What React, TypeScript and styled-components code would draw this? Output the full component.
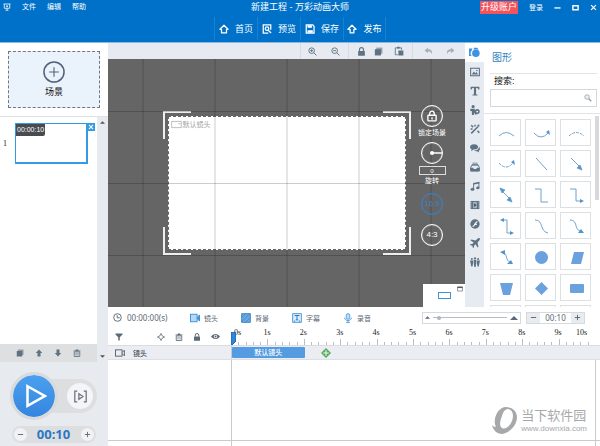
import React from "react";
import styled, { createGlobalStyle, css } from "styled-components";

const GlobalStyle = createGlobalStyle`
  *, *::before, *::after { box-sizing: border-box; }
  body { margin: 0; overflow: hidden; font-family: "Liberation Sans", "Noto Sans CJK SC", sans-serif; font-size: 8px; color: #222; }
  button, input { font: inherit; color: inherit; margin: 0; padding: 0; }
  button { border: 0; background: none; cursor: pointer; }
  svg { display: block; flex: none; }
`;

const SLATE = "#5f7282";
const BLUE = "#2f86d8";

/* ---------- icons ---------- */

type IconProps = { name: string; size?: number; color?: string };

const icons: Record<string, React.ReactNode> = {
  logo: <g fill="none" stroke="currentColor" strokeWidth="1.6"><path d="M1 2h14M2.500 2v8.500h11V2M8 10.500V14M5 14.500h6M8 4.500v4M6 6.500h4" /></g>,
  home: <path d="M8 2 1.500 8.500H4V14h8V8.500h2.500z" fill="none" stroke="currentColor" strokeWidth="2" strokeLinejoin="round" />,
  preview: <g fill="none" stroke="currentColor" strokeWidth="2"><path d="M14 9V1.500H2v13h8" /><circle cx="8" cy="7.500" r="2.800" /><path d="m10 10 4.500 4.500" /></g>,
  save: <g><path d="M2 1.500h10.500L14.500 4v10.500H2z" fill="none" stroke="currentColor" strokeWidth="2" /><path d="M4 2h7v4H4zM4 10h8.500v4H4z" fill="currentColor" /></g>,
  publish: <path d="M8 2 1.500 8.500H5V14h6V8.500h3.500z" fill="none" stroke="currentColor" strokeWidth="2" strokeLinejoin="round" />,
  zoomIn: <g fill="none" stroke="currentColor" strokeWidth="1.700"><circle cx="6.500" cy="6.500" r="5" /><path d="m10.500 10.500 4.500 4.500M4 6.500h5M6.500 4v5" /></g>,
  zoomOut: <g fill="none" stroke="currentColor" strokeWidth="1.700"><circle cx="6.500" cy="6.500" r="5" /><path d="m10.500 10.500 4.500 4.500M4 6.500h5" /></g>,
  lock: <g><rect x="2" y="7" width="12" height="8.500" rx="1" fill="currentColor" /><path d="M4.500 7V4.500a3.500 3.500 0 0 1 7 0V7" fill="none" stroke="currentColor" strokeWidth="2" /></g>,
  lockLine: <g fill="none" stroke="currentColor" strokeWidth="1.800"><rect x="2.500" y="7" width="11" height="7.500" rx="1" /><path d="M5 7V4.500a3 3 0 0 1 6 0V7M8 9.500v3" /></g>,
  copy: <g><path d="M4 1h11v11H4z" fill="currentColor" opacity=".6" /><path d="M1.500 4h11v11h-11z" fill="currentColor" /></g>,
  paste: <g><path d="M6 14H2V3h10v3" fill="none" stroke="currentColor" strokeWidth="1.400" /><path d="M5 1h4v3H5zM7 7h8v8H7z" fill="currentColor" /></g>,
  undo: <path d="M1 6 7 1v3c6 0 8 3 7 9-1-4-3-5-7-5v3z" fill="currentColor" />,
  redo: <path d="M15 6 9 1v3C3 4 1 7 2 13c1-4 3-5 7-5v3z" fill="currentColor" />,
  shapes: <g fill="currentColor"><path d="M0 2h5l-1 3a6 6 0 0 0 0 8H0z" /><circle cx="10" cy="9" r="5.500" /><path d="M7 1h5l2 2.500H7z" /></g>,
  image: <g><rect x="1" y="2" width="14" height="12" fill="none" stroke="currentColor" strokeWidth="1.700" /><path d="m3 12 3-5 2.500 3 2-2 2.500 4z" fill="currentColor" /><circle cx="11" cy="5.500" r="1.200" fill="currentColor" /></g>,
  text: <path d="M1 1h14v4.500h-1.500L12 3H9.700v10.300l2.300.7v1H4v-1l2.300-.7V3H4L2.500 5.500H1z" fill="currentColor" />,
  person: <g fill="currentColor"><circle cx="5" cy="2.500" r="2.500" /><path d="M1 6h6l2 3 2-1v7H8l-1-3-1 4H3V10L0 9z" /><circle cx="11.500" cy="10.500" r="4" /><circle cx="11.500" cy="10.500" r="1.500" fill="#eef1f6" /></g>,
  wand: <g stroke="currentColor" strokeWidth="2.400" fill="none"><path d="m2 15 11-11M2 2l3 3M12 11l3 3M8 1v3M1 8h3" /><path d="M12 1h3v3h-3z" fill="currentColor" stroke="none" /></g>,
  chat: <g fill="currentColor"><path d="M6.500 2C2.500 2 0 4 0 6.500 0 8 1 9.500 2.500 10L2 13l3.500-2.500C10 11 13 9 13 6.500S10.500 2 6.500 2z" /><path d="M14.500 6c2 2 2 5-.5 6.500l.5 2.500-3-2c-2 .5-4 0-5-1 4.500 0 8-2 8-6z" /></g>,
  tray: <g><path d="M1 9 3 5h10l2 4v5H1z" fill="none" stroke="currentColor" strokeWidth="1.600" /><path d="M1 9h4l1 2h4l1-2h4v6H1zM4 1h8v1.500H4zM3 3.200h10v1H3z" fill="currentColor" /></g>,
  music: <g fill="currentColor"><path d="M5 3 15 1v3L6.500 5.500V13H5z" /><path d="M13.500 2H15v9h-1.500z" /><ellipse cx="4" cy="13" rx="3" ry="2.400" /><ellipse cx="12.500" cy="11" rx="2.700" ry="2.200" /></g>,
  film: <g><path d="M1 1.500h14v13H1z" fill="currentColor" /><path d="M5 3h6v10H5z" fill="#a6b4bf" /><path d="m6.500 5 4 3-4 3z" fill="#44525e" /><path d="M2.500 3v10M13.500 3v10" stroke="#aebac4" strokeDasharray="1.500 1.500" /></g>,
  flash: <g><circle cx="8" cy="8" r="7.500" fill="currentColor" /><path d="M12 4c-4 0-3.500 8-8 8M6.500 8.500H11" stroke="#eef1f6" strokeWidth="2" fill="none" /></g>,
  plane: <path d="M15.500.5c-1-1-3 0-4 1L9 4 2 2.500.8 4 6 7 3.500 9.700 1 9.500 0 11l3.500 1.500L5 16l1.500-1-.2-2.500L9 10l3 5.200 1.500-1.200L12 7l2.500-2.500c1-1 2-3 1-4z" fill="currentColor" />,
  crowd: <g fill="currentColor"><circle cx="8" cy="2" r="1.800" /><circle cx="3" cy="3" r="1.600" /><circle cx="13" cy="3" r="1.600" /><path d="M6 4.500h4V10L9 16H7L6 10zM0 5.500h5V9L4 15H2L1 10zM11 5.500h5L15 10l-1 5h-2l-1-6z" /></g>,
  arrowUp: <path d="M8 1 1.500 8H5v7h6V8h3.500z" fill="currentColor" />,
  arrowDown: <path d="M8 15 1.500 8H5V1h6v7h3.500z" fill="currentColor" />,
  trash: <g><path d="M2.500 5.500h11V15h-11z" fill="none" stroke="currentColor" strokeWidth="1.700" /><path d="M1 3h14v1.700H1zM5.500 1h5v2h-5z" fill="currentColor" /><path d="M6 7v6M10 7v6" stroke="currentColor" strokeWidth="1.500" /></g>,
  clock: <g fill="none" stroke="currentColor" strokeWidth="1.700"><circle cx="8" cy="8" r="6.800" /><path d="M7.500 4v4.500H12" /></g>,
  camera: <g fill="none" stroke="currentColor" strokeWidth="1.300"><rect x=".8" y="3" width="10.500" height="10" /><path d="m11.500 7 3.500-3.500v9L11.500 9" /></g>,
  cameraBlue: <g stroke="#3c91dc" strokeWidth="1.500"><rect x=".8" y="2" width="10.500" height="12" fill="#b5d8f6" /><path d="m12 7 3.200-4v10L12 9z" fill="#3c91dc" /></g>,
  pattern: <g><path d="M1 1h14v14H1z" fill="#65aae7" stroke="#3479b9" strokeWidth="1.300" /><path d="m1 7 6-6M1 14 14 1M7 15l8-8" stroke="#3479b9" /></g>,
  caption: <g fill="none" stroke="#3c91dc" strokeWidth="1.400"><path d="M1 1h14v14H1z" fill="#dceefe" /><path d="M4.500 5V4h7v1M8 4v7M6 11h4M3 13h2M11 13h2" stroke="#286baf" /></g>,
  mic: <g fill="none" stroke="#4d9ae0" strokeWidth="1.500"><rect x="5.200" y="1" width="5.600" height="9" rx="2.800" fill="#c3e0f8" /><path d="M2.500 7.500c0 6 11 6 11 0M8 12v3M5 15h6" /></g>,
  funnel: <path d="M1 1h14v2L9.500 8.500V15h-3V8.500L1 3z" fill="currentColor" />,
  target: <g fill="none" stroke="currentColor" strokeWidth="1.600"><path d="m8 2.500 5.500 5.500L8 13.500 2.500 8z" /><path d="M8 0v5M8 11v5M0 8h5M11 8h5" /></g>,
  eye: <g><path d="M0 8c4-6 12-6 16 0-4 6-12 6-16 0z" fill="currentColor" /><circle cx="8" cy="8" r="3" fill="#fff" /><circle cx="8" cy="8" r="1.700" fill="currentColor" /></g>,
  minus: <path d="M2 8h12" stroke="currentColor" strokeWidth="2.200" />,
  plus: <path d="M2 8h12M8 2v12" stroke="currentColor" strokeWidth="2.200" />,
  min: <path d="M1 9h14" stroke="currentColor" strokeWidth="3" />,
  max: <path d="M2 4h12v9H2z" stroke="currentColor" strokeWidth="3.200" fill="none" />,
  close: <path d="m2.500 2.500 11 11m0-11-11 11" stroke="currentColor" strokeWidth="2.800" />,
  addScene: <g fill="none" stroke="currentColor" strokeWidth="1.100"><circle cx="8" cy="8" r="7.300" /><path d="M8 4.500v7M4.500 8h7" strokeWidth=".8" /></g>,
  search: <g fill="none" stroke="currentColor" strokeWidth="1.400"><circle cx="6" cy="6" r="4.500" fill="#edf1f4" /><path d="m9.500 9.500 5 5" strokeWidth="2.600" /></g>,
  play: <path d="M3 1.500 14.500 8 3 14.500z" fill="none" stroke="currentColor" strokeWidth="1.700" />,
  playRange: <g fill="none" stroke="currentColor" strokeWidth="1.500"><path d="M4 1.500H1v13h3M12 1.500h3v13h-3M6 4.500 11 8l-5 3.500z" /></g>,
  triUp: <path d="M0 12 8 4l8 8z" fill="currentColor" />,
  triDown: <path d="M0 4h16l-8 8z" fill="currentColor" />,
  addClip: <g><path d="m8 0 8 8-8 8-8-8z" fill="#55aa62" /><path d="M8 3.500v9M3.500 8h9" stroke="#e9f7ea" strokeWidth="1.800" /></g>,
  popout: <g><path d="M1.500 2.500h13v11h-13z" fill="none" stroke="currentColor" strokeWidth="1.600" /><path d="M1 2h14v3.500H1z" fill="currentColor" /></g>,
  shotTag: <path d="M1 3.500h14v9H1zM12 7l-1.500-1M12 7h2" fill="none" stroke="currentColor" strokeWidth="1" />,
};

const Icon = ({ name, size = 8, color = "currentColor" }: IconProps) => (
  <svg width={size} height={size} viewBox="0 0 16 16" color={color} aria-hidden="true">
    {icons[name]}
  </svg>
);

const HEAD = "#4f93d3";
const shapeArt: { label: string; art: React.ReactNode }[] = [
  { label: "arc", art: <path d="M8 16q7-7 15 0" /> },
  { label: "arc arrow", art: <><path d="M8 13q7 8 14 0" /><path d="m20 12 3-2 1 5z" fill={HEAD} stroke="none" /></> },
  { label: "dashed arc", art: <path d="M8 16q7-7 15 0" strokeDasharray="3 1" /> },
  { label: "dashed arc arrow", art: <><path d="M8 12q7 8 14 0" strokeDasharray="3 1" /><path d="m20 11 3-2 1 5z" fill={HEAD} stroke="none" /></> },
  { label: "line", art: <path d="m10 7 11 12" /> },
  { label: "arrow", art: <><path d="m10 7 9 9" /><path d="m21 19-5-2 3-3z" fill={HEAD} /></> },
  { label: "double arrow", art: <><path d="m11 9 8 8" /><path d="m9 6 5 2-3 3zM21 20l-5-2 3-3z" fill={HEAD} /></> },
  { label: "elbow", art: <path d="M9 7h6v13h7" /> },
  { label: "elbow arrow", art: <><path d="M9 7h6v12h6" /><path d="m23 19-4-2v4z" fill={HEAD} stroke="none" /></> },
  { label: "double elbow arrow", art: <><path d="M11 7h5v13h5" /><path d="m9 7 4-2v4zM23 20l-4-2v4z" fill={HEAD} stroke="none" /></> },
  { label: "curve", art: <path d="M9 7c9 0 4 11 13 13" /> },
  { label: "curve arrow", art: <><path d="M9 7c8 0 4 9 10 11" /><path d="m23 20-6 0 3-4z" fill={HEAD} stroke="none" /></> },
  { label: "double curve arrow", art: <><path d="M12 9c5 0 2 8 7 9" /><path d="m9 8 5-2 0 5zM22 20l-6 0 4-4z" fill={HEAD} stroke="none" /></> },
  { label: "circle", art: <circle cx="15.500" cy="13.500" r="6.500" fill="#6ba2dd" stroke="none" /> },
  { label: "parallelogram", art: <path d="M13 8h10l-3 12H10z" fill="#6ba2dd" stroke="none" /> },
  { label: "trapezoid", art: <path d="M9 8h13l-3 12h-7z" fill="#6ba2dd" stroke="none" /> },
  { label: "diamond", art: <path d="m15.500 7 6.500 6.500-6.500 6.500L9 13.500z" fill="#6ba2dd" stroke="none" /> },
  { label: "rectangle", art: <rect x="9" y="9" width="14" height="9" rx="1" fill="#6ba2dd" stroke="none" /> },
  { label: "square", art: null },
  { label: "ring", art: null },
  { label: "star", art: null },
];

/* ---------- shell ---------- */

const Shell = styled.div`display: flex; flex-direction: column; height: 100vh; min-height: 400px; background: #fff;`;

const Header = styled.header`
  flex: none; height: 43px; background: #0071c8; color: #fff; border-bottom: 1px solid #86bbe6;
`;
const TitleBar = styled.div`display: grid; grid-template-columns: 1fr auto 1fr; height: 14px; align-items: center;`;
const MenuBar = styled.nav`display: flex; align-items: center; gap: 11px; padding-left: 3px; font-size: 7px;`;
const MenuButton = styled.button`line-height: 12px;`;
const Title = styled.h1`margin: 0; font-size: 9px; line-height: 13px; font-weight: 400;`;
const WindowTools = styled.div`display: flex; justify-content: flex-end; align-items: center; gap: 11px; padding-right: 3px;`;
const Upgrade = styled.a`background: #f5535b; color: #fff; font-size: 9px; line-height: 13px; padding: 0 1px; text-decoration: none;`;
const Login = styled.a`color: #fff; font-size: 7px; text-decoration: none;`;
const MainNav = styled.nav`display: flex; justify-content: center; height: 28px; padding-top: 3px;`;
const NavButton = styled.button`
  display: flex; align-items: center; justify-content: center; gap: 6px; width: 43px; height: 23px;
  border-left: 1px solid #1d80cd; font-size: 9px;
  &:last-child { border-right: 1px solid #1d80cd; }
`;

const Body = styled.div`flex: 1; min-height: 0; display: grid; grid-template-columns: 108px minmax(0, 1fr);`;

/* ---------- left column ---------- */

const ScenePanel = styled.aside`display: flex; flex-direction: column; min-height: 0; background: #fff;`;
const AddArea = styled.div`flex: none; height: 74px; padding: 8px 8px 9px; border-bottom: 1px solid #dfe3e6;`;
const AddScene = styled.button`
  display: flex; flex-direction: column; align-items: center; justify-content: center; gap: 3px;
  width: 100%; height: 57px; border: 1px dashed #6d7884; background: #eaf2fc; color: #51627a;
  span { color: #111; font-size: 9px; line-height: 13px; }
`;
const SceneArea = styled.div`flex: 1; min-height: 0; display: grid; grid-template-columns: minmax(0, 1fr) 11px;`;
const SceneColumn = styled.div`display: flex; flex-direction: column;`;
const SceneList = styled.ol`flex: 1; list-style: none; margin: 0; padding: 6px 2px 0 3px;`;
const SceneItem = styled.li`display: flex; align-items: center; gap: 8px; font: 8px "Liberation Serif", serif;`;
const Thumb = styled.div`position: relative; width: 73px; height: 41px; border: 2px solid #349ae3; border-width: 1px 2px 2px 1px; background: #fff;`;
const ThumbTime = styled.span`
  position: absolute; left: 0; top: 0; padding: 0 1px; background: #484b50; color: #fff;
  font: 7px/12px "Liberation Sans", sans-serif; border-radius: 0 0 2px 0;
`;
const ThumbClose = styled.button`
  position: absolute; right: -9px; top: -1px; width: 8px; height: 8px; display: grid; place-items: center;
  background: #349ae3; color: #fff;
`;
const SceneTools = styled.div`
  display: flex; align-items: center; gap: 11px; height: 18px; padding-left: 16px; background: #dedfe0; color: ${SLATE};
`;
const ScrollRail = styled.div`
  display: flex; flex-direction: column; justify-content: space-between; align-items: center;
  padding: 3px 0 3px; background: #e7eaee; color: #4d555d;
`;

const Player = styled.section`
  flex: none; height: 84px; display: flex; flex-direction: column; align-items: center; justify-content: space-between;
  padding: 17px 11px 3px 10px; background: #e7ebef;
`;
const PlayRow = styled.div`
  display: flex; align-items: center; justify-content: space-between; width: 100%; height: 34px; padding-right: 4px;
  border-radius: 17px; background: #dcdee0;
`;
const PlayButton = styled.button`
  display: grid; place-items: center; width: 48px; height: 48px; margin: -7px 0; border: 3px solid #d8dadd; border-radius: 50%;
  background: linear-gradient(#4ca0f0, #3386de) padding-box; color: #fff; padding-left: 2px;
`;
const RangeButton = styled.button`
  display: grid; place-items: center; width: 26px; height: 26px; border-radius: 50%; background: #f3f5f8; color: #6a7078;
`;
const Duration = styled.div`
  display: flex; align-items: center; justify-content: space-between; width: 84px; height: 17px; padding: 0 2px;
  border-radius: 9px; background: #dcdee0; color: #2b78c4; font: 700 13px/17px "Noto Sans", sans-serif;
`;
const RoundButton = styled.button`
  display: grid; place-items: center; width: 13px; height: 13px; border-radius: 50%; background: #f0f2f5; color: #656d78;
`;

/* ---------- work area ---------- */

const Work = styled.main`display: flex; flex-direction: column; min-width: 0; min-height: 0;`;
const Editor = styled.div`flex: 1; min-height: 0; display: grid; grid-template-columns: minmax(0, 1fr) 19px 116px; overflow: hidden;`;
const CanvasColumn = styled.div`display: flex; flex-direction: column; min-width: 0;`;
const Toolbar = styled.div`flex: none; display: flex; justify-content: flex-end; height: 16px; background: #e7ebf1; color: ${SLATE};`;
const ToolGroup = styled.div<{ $pad?: string }>`display: flex; padding: ${(p) => p.$pad ?? "0"}; border-left: 1px solid #d8dde3;`;
const ToolButton = styled.button<{ $w?: number; $dim?: boolean }>`
  display: grid; place-items: center; width: ${(p) => p.$w ?? 23}px; ${(p) => p.$dim && css`color: #a4b0bb;`}
`;
const Canvas = styled.div`
  position: relative; flex: 1; display: grid; place-items: center; background: #656565; overflow: hidden;
  &::after {
    content: ""; position: absolute; inset: 0; pointer-events: none;
    background:
      linear-gradient(to right, rgba(0,0,0,.2) 1px, transparent 1px) calc(50% + 36px) 0 / 72px 72px,
      linear-gradient(to bottom, rgba(0,0,0,.2) 1px, transparent 1px) 0 calc(50% + 36px) / 72px 72px;
  }
`;
const corner = (x: string, y: string) =>
  `linear-gradient(#eee, #eee) ${x} ${y} / 28px 2px no-repeat, linear-gradient(#eee, #eee) ${x} ${y} / 2px 28px no-repeat`;
const Frame = styled.div`
  padding: 5px; width: 248px; height: 144px;
  background: ${corner("left", "top")}, ${corner("right", "top")}, ${corner("left", "bottom")}, ${corner("right", "bottom")};
`;
const Stage = styled.div`
  display: flex; align-items: flex-start; gap: 1px; height: 100%; padding: 2px; background: #fff; border: 1px dashed #666;
  color: #a3a3a3; font-size: 7px; line-height: 11px;
`;
const CanvasControls = styled.div`
  position: absolute; z-index: 1; right: 13px; top: 46px; display: flex; flex-direction: column; align-items: center; width: 40px;
  color: #fff; font-size: 7px; line-height: 12px;
`;
const RingButton = styled.button<{ $active?: boolean; $gap?: number }>`
  display: grid; place-items: center; width: 22px; height: 22px; margin-top: ${(p) => p.$gap ?? 0}px;
  border: 1px solid currentColor; border-radius: 50%; box-shadow: inset 0 0 1px currentColor;
  color: ${(p) => (p.$active ? "#3b82c8" : "#fff")}; font-size: 8px;
`;
const ControlLabel = styled.label`height: 12px; white-space: nowrap;`;
const AngleInput = styled.input`
  width: 27px; height: 9px; margin-top: 2px; border: 1px solid #ddd; background: transparent; text-align: center; font-size: 6px; line-height: 7px;
`;
const MiniMap = styled.div`
  position: absolute; z-index: 1; right: 0; bottom: 0; width: 42px; height: 23px; background: #fff; display: grid; place-items: center; color: #4e5963;
`;
const MiniView = styled.div`width: 13px; height: 7px; border: 1px solid #4292d4;`;
const PopOut = styled.button`position: absolute; top: 2px; right: 2px;`;

const AssetTabs = styled.div`display: flex; flex-direction: column; background: #e6eaf1; color: ${SLATE};`;
const AssetTab = styled.button<{ $active?: boolean }>`
  display: grid; place-items: center; height: 19px;
  ${(p) => p.$active && css`background: #fff; color: #3e93e4;`}
`;

const AssetPanel = styled.section`display: flex; flex-direction: column; min-height: 0; background: #fff;`;
const AssetHead = styled.div`flex: none; height: 71px; padding: 4px 3px 0 6px; border-bottom: 1px solid #dfe3e6;`;
const AssetTitle = styled.h2`
  margin: 0; padding-left: 2px; height: 27px; border-bottom: 1px solid #e3e3e3; color: #3485bd; font-size: 10px; line-height: 22px; font-weight: 400;
`;
const SearchLabel = styled.label`display: block; padding-left: 4px; color: #111; font-size: 9px; line-height: 14px; height: 15px;`;
const SearchBox = styled.div`
  display: flex; align-items: center; height: 18px; padding: 0 4px; border: 1px solid #d3d8dd; color: #8d99a3;
  input { flex: 1; min-width: 0; border: 0; outline: 0; background: none; }
`;
const ShapeArea = styled.div`flex: 1; min-height: 0; display: flex; justify-content: space-between; padding: 2px 1px 0 6px; overflow: hidden;`;
const ShapeGrid = styled.div`
  flex: 1; display: grid; grid-template-columns: repeat(3, minmax(0, 1fr)); grid-auto-rows: 27px; gap: 4px; padding-top: 3px;
`;
const ShapeCell = styled.button`display: grid; place-items: center; border: 1px solid #dce0e3; overflow: hidden;`;
const ShapeScroll = styled.div`width: 4px; height: 84px; margin-left: 4px; background: #d7d9db;`;

/* ---------- timeline ---------- */

const Timeline = styled.section`flex: none; height: 139px; display: flex; flex-direction: column; background: #fff; color: #5c6976; position: relative;`;
const TimelineBar = styled.div`display: flex; align-items: center; height: 21px; padding: 0 15px 0 5px; font-size: 7px;`;
const Clock = styled.div`display: flex; align-items: center; gap: 5px; width: 77px; font: 8px "Noto Sans", sans-serif;`;
const AddTrack = styled.button`display: flex; align-items: center; gap: 4px; width: 51px;`;
const ZoomBox = styled.div`
  display: flex; align-items: center; gap: 3px; width: 99px; height: 12px; margin: 0 5px 0 auto; padding: 0 2px; border: 1px solid #d6dade;
`;
const ZoomRange = styled.input`
  appearance: none; flex: 1; min-width: 0; height: 8px; background: linear-gradient(#b8bdc2, #b8bdc2) center / 100% 1px no-repeat;
  &::-webkit-slider-thumb { appearance: none; width: 4px; height: 4px; border-radius: 50%; background: #afb4b9; }
`;
const Stepper = styled.div`
  display: flex; align-items: stretch; width: 59px; height: 12px; border: 1px solid #d6dade; font: 8px/10px "Noto Sans", sans-serif;
  span { flex: 1; text-align: center; }
  button { width: 13px; display: grid; place-items: center; background: #e8ebef; }
`;
const Row = styled.div<{ $h: number; $shade?: boolean }>`
  display: grid; grid-template-columns: 123px minmax(0, 1fr) 5px; height: ${(p) => p.$h}px;
  ${(p) => p.$shade && css`background: #ebedf2; border-top: 1px solid #dadddf; border-bottom: 1px solid #dcdfe3;`}
`;
const TrackTools = styled.div`display: flex; align-items: center; padding: 0 11px 0 7px;`;
const TrackToggles = styled.div`display: flex; align-items: center; gap: 10px; margin-left: auto;`;
const TrackName = styled.div`display: flex; align-items: center; gap: 8px; padding-left: 7px; color: #444d58; font-size: 7px; font-weight: 500;`;
const Ruler = styled.div`position: relative; display: grid; grid-template-columns: repeat(10, minmax(0, 1fr));`;
const Second = styled.div`
  display: flex; flex-direction: column; justify-content: space-between; color: #222; font: 8px/10px "Liberation Serif", serif;
`;
const SecondLabels = styled.div<{ $first?: boolean; $last?: boolean }>`
  display: flex; justify-content: space-between; margin-left: ${(p) => (p.$first ? 3 : -4)}px; margin-right: ${(p) => (p.$last ? 8 : 0)}px;
`;
const Ticks = styled.div`
  display: grid; grid-template-columns: repeat(5, 1fr); height: 6px; align-items: end;
  i { height: 3px; border-left: 1px solid #b9bec3; }
  i:first-child { height: 6px; }
`;
const Playhead = styled.div`position: absolute; left: 0; top: 4px;`;
const Clips = styled.div`display: flex; align-items: center; border-left: 1px solid #c9cccf;`;
const Clip = styled.button`width: 20%; height: 11px; background: #549be2; color: #fff; border-radius: 1px; font-size: 7px; line-height: 10px; font-weight: 500;`;
const AddClip = styled.button`margin-left: 16px;`;
const EmptyTracks = styled.div`
  flex: 1; display: grid; grid-template-columns: 123px minmax(0, 1fr) 5px; border-bottom: 1px solid #c9cccf;
  div + div { border-left: 1px solid #c9cccf; }
`;
const TimelineFoot = styled(EmptyTracks)`flex: none; height: 5px; border-bottom: 0;`;

const Watermark = styled.div`
  position: absolute; right: 13px; bottom: 12px; display: flex; align-items: center; gap: 4px; color: #a6a8aa;
`;
const MarkText = styled.div`
  font-size: 13px; line-height: 15px;
  small { display: block; font-size: 8px; line-height: 11px; }
`;

const assetTabs: [string, string][] = [
  ["shapes", "图形"], ["image", "图片"], ["text", "文本"], ["person", "角色"], ["wand", "效果"], ["chat", "对话"],
  ["tray", "素材"], ["music", "音乐"], ["film", "视频"], ["flash", "动画"], ["plane", "飞机"], ["crowd", "人群"],
];
const trackTypes: [string, string][] = [["cameraBlue", "镜头"], ["pattern", "背景"], ["caption", "字幕"], ["mic", "录音"]];
const navItems: [string, string][] = [["home", "首页"], ["preview", "预览"], ["save", "保存"], ["publish", "发布"]];

export default function App() {
  return (
    <Shell>
      <GlobalStyle />
      <Header>
        <TitleBar>
          <MenuBar>
            <Icon name="logo" size={8} />
            {["文件", "编辑", "帮助"].map((m) => <MenuButton key={m}>{m}</MenuButton>)}
          </MenuBar>
          <Title>新建工程 - 万彩动画大师</Title>
          <WindowTools>
            <Upgrade href="#upgrade">升级账户</Upgrade>
            <Login href="#login">登录</Login>
            {["min", "max", "close"].map((n) => <button key={n} aria-label={n}><Icon name={n} size={7} /></button>)}
          </WindowTools>
        </TitleBar>
        <MainNav>
          {navItems.map(([icon, label]) => <NavButton key={icon}><Icon name={icon} size={10} />{label}</NavButton>)}
        </MainNav>
      </Header>

      <Body>
        <ScenePanel>
          <AddArea>
            <AddScene><Icon name="addScene" size={22} /><span>场景</span></AddScene>
          </AddArea>
          <SceneArea>
            <SceneColumn>
              <SceneList>
                <SceneItem>
                  1
                  <Thumb>
                    <ThumbTime>00:00:10</ThumbTime>
                    <ThumbClose aria-label="delete scene"><Icon name="close" size={6} /></ThumbClose>
                  </Thumb>
                </SceneItem>
              </SceneList>
              <SceneTools>
                {["copy", "arrowUp", "arrowDown", "trash"].map((n) => <button key={n} aria-label={n}><Icon name={n} size={8} /></button>)}
              </SceneTools>
            </SceneColumn>
            <ScrollRail><Icon name="triUp" size={5} /><Icon name="triDown" size={5} /></ScrollRail>
          </SceneArea>
          <Player>
            <PlayRow>
              <PlayButton aria-label="play"><Icon name="play" size={24} /></PlayButton>
              <RangeButton aria-label="play range"><Icon name="playRange" size={13} /></RangeButton>
            </PlayRow>
            <Duration>
              <RoundButton aria-label="shorter"><Icon name="minus" size={7} /></RoundButton>
              00:10
              <RoundButton aria-label="longer"><Icon name="plus" size={7} /></RoundButton>
            </Duration>
          </Player>
        </ScenePanel>

        <Work>
          <Editor>
            <CanvasColumn>
              <Toolbar>
                <ToolGroup $pad="0 1px 0 0">
                  <ToolButton aria-label="zoom in"><Icon name="zoomIn" size={9} /></ToolButton>
                  <ToolButton aria-label="zoom out"><Icon name="zoomOut" size={9} /></ToolButton>
                </ToolGroup>
                <ToolGroup $pad="0 0 0 3px">
                  <ToolButton $w={18} aria-label="lock"><Icon name="lock" size={9} /></ToolButton>
                  <ToolButton $w={16} aria-label="copy"><Icon name="copy" size={9} /></ToolButton>
                  <ToolButton $w={26} aria-label="paste"><Icon name="paste" size={10} /></ToolButton>
                </ToolGroup>
                <ToolGroup $pad="0 4px">
                  <ToolButton $w={22} $dim aria-label="undo"><Icon name="undo" size={9} /></ToolButton>
                  <ToolButton $w={22} $dim aria-label="redo"><Icon name="redo" size={9} /></ToolButton>
                </ToolGroup>
              </Toolbar>
              <Canvas>
                <Frame>
                  <Stage><Icon name="shotTag" size={11} />默认镜头</Stage>
                </Frame>
                <CanvasControls>
                  <RingButton aria-label="锁定场景"><Icon name="lockLine" size={12} /></RingButton>
                  <ControlLabel as="span">锁定场景</ControlLabel>
                  <RingButton $gap={3} aria-label="旋转">
                    <svg width="20" height="20" viewBox="0 0 20 20"><path d="M10 10h10" stroke="#fff" strokeWidth="1.500" /><circle cx="10" cy="10" r="2" fill="#fff" /></svg>
                  </RingButton>
                  <AngleInput id="angle" defaultValue="0" />
                  <ControlLabel htmlFor="angle">旋转</ControlLabel>
                  <RingButton $active $gap={6}>16:9</RingButton>
                  <RingButton $gap={9}>4:3</RingButton>
                </CanvasControls>
                <MiniMap><MiniView /><PopOut aria-label="pop out"><Icon name="popout" size={6} /></PopOut></MiniMap>
              </Canvas>
            </CanvasColumn>

            <AssetTabs>
              {assetTabs.map(([icon, label], i) => (
                <AssetTab key={icon} $active={i === 0} aria-label={label}><Icon name={icon} size={i === 0 ? 11 : 10} /></AssetTab>
              ))}
            </AssetTabs>

            <AssetPanel>
              <AssetHead>
                <AssetTitle>图形</AssetTitle>
                <SearchLabel htmlFor="search">搜索:</SearchLabel>
                <SearchBox><input id="search" /><Icon name="search" size={8} /></SearchBox>
              </AssetHead>
              <ShapeArea>
                <ShapeGrid>
                  {shapeArt.map((s) => (
                    <ShapeCell key={s.label} aria-label={s.label}>
                      <svg width="31" height="27" viewBox="0 0 31 27" fill="none" stroke="#73a2cc" strokeWidth="1">{s.art}</svg>
                    </ShapeCell>
                  ))}
                </ShapeGrid>
                <ShapeScroll />
              </ShapeArea>
            </AssetPanel>
          </Editor>

          <Timeline>
            <TimelineBar>
              <Clock><Icon name="clock" size={9} />00:00:00(s)</Clock>
              {trackTypes.map(([icon, label]) => <AddTrack key={icon}><Icon name={icon} size={10} />{label}</AddTrack>)}
              <ZoomBox>
                <Icon name="triUp" size={5} />
                <ZoomRange type="range" defaultValue={5} aria-label="timeline zoom" />
                <Icon name="triUp" size={8} />
              </ZoomBox>
              <Stepper>
                <button aria-label="decrease"><Icon name="minus" size={7} /></button>
                <span>00:10</span>
                <button aria-label="increase"><Icon name="plus" size={7} /></button>
              </Stepper>
            </TimelineBar>
            <Row $h={17}>
              <TrackTools>
                <Icon name="funnel" size={8} />
                <TrackToggles>
                  <Icon name="target" size={8} /><Icon name="trash" size={8} /><Icon name="lock" size={8} /><Icon name="eye" size={9} />
                </TrackToggles>
              </TrackTools>
              <Ruler>
                {Array.from({ length: 10 }, (_, s) => (
                  <Second key={s}>
                    <SecondLabels $first={s === 0} $last={s === 9}><span>{s}s</span>{s === 9 && <span>10s</span>}</SecondLabels>
                    <Ticks><i /><i /><i /><i /><i /></Ticks>
                  </Second>
                ))}
                <Playhead><svg width="5" height="13" viewBox="0 0 5 13"><path d="M0 0h5v9l-4 4H0z" fill={BLUE} stroke="#1b66ad" /></svg></Playhead>
              </Ruler>
            </Row>
            <Row $h={15} $shade>
              <TrackName><Icon name="camera" size={10} />镜头</TrackName>
              <Clips>
                <Clip>默认镜头</Clip>
                <AddClip aria-label="add clip"><Icon name="addClip" size={10} /></AddClip>
              </Clips>
            </Row>
            <EmptyTracks><div /><div /><div /></EmptyTracks>
            <TimelineFoot><div /><div /><div /></TimelineFoot>
            <Watermark>
              <svg width="25" height="27" viewBox="0 0 25 27">
                <path d="M14 0C6 0 0 12 4 20c-2 0-3-1-4-2 1 5 5 9 10 9 8-1 15-9 15-17C25 4 20 0 14 0zm2 2c5 1 6 6 4 12-2 5-7 9-10 7s-2-7 0-12c1-4 3-7 6-7z" fill="currentColor" fillRule="evenodd" />
              </svg>
              <MarkText>当下软件园<small>www.downxia.com</small></MarkText>
            </Watermark>
          </Timeline>
        </Work>
      </Body>
    </Shell>
  );
}
